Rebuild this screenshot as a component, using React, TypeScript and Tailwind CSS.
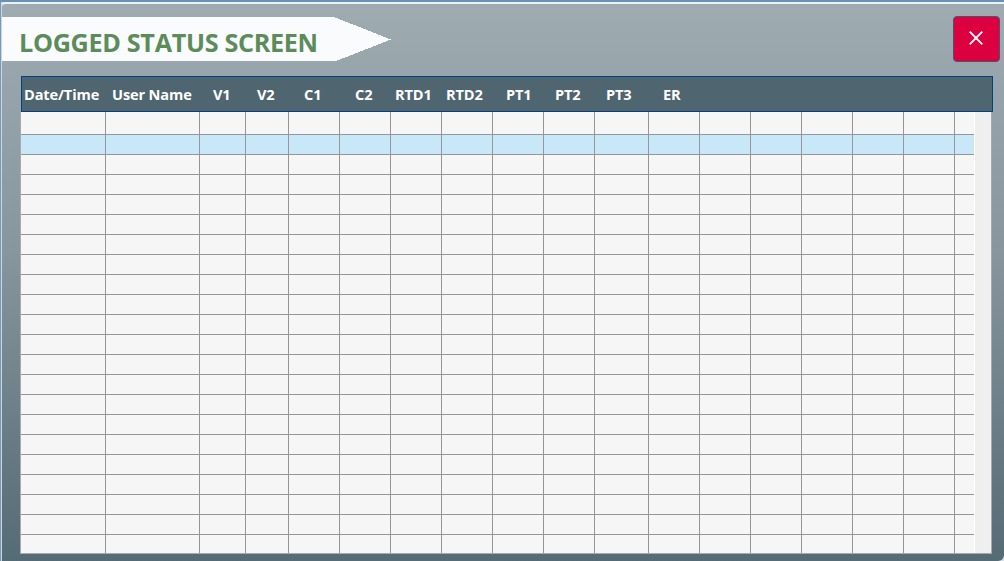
const labels = ["Date/Time", "User Name", "V1", "V2", "C1", "C2", "RTD1", "RTD2", "PT1", "PT2", "PT3", "ER"];
const columns = Array.from({ length: 18 }, (_, i) => i);
const rows = Array.from({ length: 22 }, (_, i) => i);

function Title() {
  return (
    <div className="relative mt-[13px] h-[44px] w-[389px]">
      <svg className="absolute inset-0" width="389" height="44" shapeRendering="crispEdges">
        <path d="M0 0H332L389 22.5L334 44H0Z" fill="#fafbfd" />
      </svg>
      <h1 className="relative pl-[17px] pt-[7px] text-[25.2px] leading-[36px] font-bold tracking-[-0.32px] whitespace-nowrap text-[#5b8c5a]">
        LOGGED STATUS SCREEN
      </h1>
    </div>
  );
}

function CloseButton() {
  return (
    <button aria-label="Close" className="mt-[12px] mr-[4px] flex h-[46px] w-[47px] items-center justify-center rounded-[4px] border border-[#4c5268] bg-[#dc0040]">
      <svg width="16" height="16" viewBox="0 0 16 16" className="-mt-[2px] -ml-[1px]">
        <path d="M1.7 1.7L14.3 14.3M14.3 1.7L1.7 14.3" stroke="white" strokeWidth="1.9" />
      </svg>
    </button>
  );
}

function TableHeader() {
  return (
    <div className="grid h-[36px] w-[972px] grid-cols-[88px_101px_44px_47px_51px_40px_51px_60px_49px_51px_57px_60px] border border-[#064080] bg-[#4f6570] pl-[2px] text-[14.6px] leading-[35px] font-bold tracking-[-0.15px] text-white">
      {labels.map((label) => (
        <span key={label} className="whitespace-nowrap">{label}</span>
      ))}
    </div>
  );
}

function TableBody() {
  return (
    <div className="-ml-px flex h-[442px] w-[972px] border-x border-b border-[#a9a9ad] bg-[#f6f6f6]">
      <div className="w-[953px]">
        {rows.map((row) => (
          <div
            key={row}
            className={
              "grid grid-cols-[85px_94px_46px_43px_51px_51px_51px_51px_51px_51px_54px_51px_51px_51px_51px_51px_51px_19px] " +
              (row === 0 ? "h-[23px] border-b border-[#969696]" : row === 21 ? "h-[18px]" : "h-[20px] border-b border-[#969696]") +
              (row === 1 ? " bg-[#c8e7f9]" : "")
            }
          >
            {columns.map((column) => (
              <div key={column} className={column < 17 ? "border-r border-[#969696]" : ""} />
            ))}
          </div>
        ))}
      </div>
      <div className="flex-1 border-l border-white bg-[#efefef]" />
    </div>
  );
}

export default function App() {
  return (
    <div className="h-[561px] w-[1004px] overflow-hidden border-t-2 border-l border-t-[#6991b8] border-l-[#7799c0] bg-[#d5dbe0] font-['Open_Sans','Noto_Sans',sans-serif]">
      <main className="h-[559px] w-[1003px] overflow-hidden rounded-tl-[5px] rounded-br-[6px] border-t-2 border-l border-t-[#edf2f5] border-l-[#cbd7df] bg-linear-to-b from-[#9eabb1] via-[#87959d] via-45% to-[#556b75]">
        <header className="flex h-[72px] items-start justify-between">
          <Title />
          <CloseButton />
        </header>
        <section className="ml-[19px]">
          <TableHeader />
          <TableBody />
        </section>
      </main>
    </div>
  );
}
